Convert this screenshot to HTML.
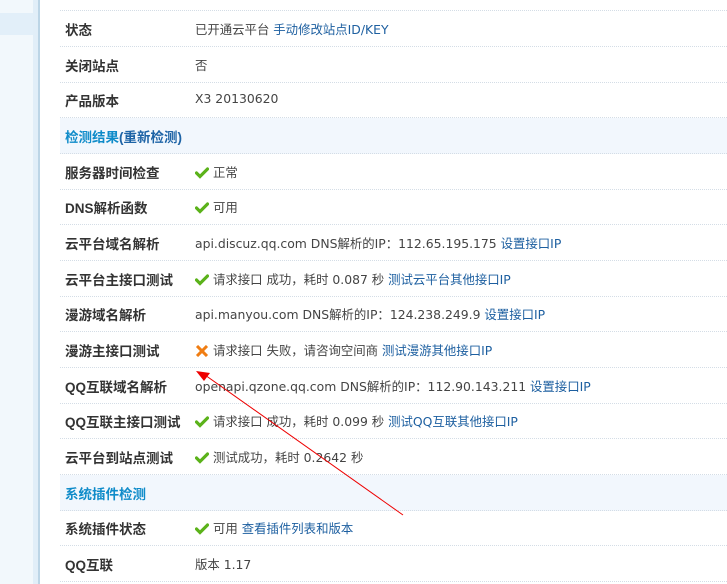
<!DOCTYPE html>
<html><head><meta charset="utf-8"><style>
body{margin:0;width:727px;height:584px;overflow:hidden;background:#fff;font-family:"Liberation Sans","Noto Sans CJK SC",sans-serif;font-size:12px;color:#333;position:relative}
.sb{position:absolute;left:0;top:0;width:33px;height:584px;background:#f2f8fc}
.sb2{position:absolute;left:33px;top:0;width:5px;height:584px;background:#e1eef8}
.sb3{position:absolute;left:38px;top:0;width:2px;height:584px;background:#bcd5e6}
.hl{position:absolute;left:0;top:13px;width:33px;height:22px;background:#e2eff9}
.row{position:absolute;left:60px;right:0;height:36px;border-bottom:1px dotted #d4dde6;box-sizing:border-box}
.row .l{position:absolute;left:5px;top:8px;font-weight:bold;color:#333;font-size:13.5px}
.row .v{position:absolute;left:135px;top:9px;color:#444;white-space:nowrap;font-family:"DejaVu Sans","Noto Sans CJK SC",sans-serif;font-size:12.4px}
.hd{background:#f2f7fd}
.hd .l{color:#0e8bc9}
.hd .l span{color:#1d63a6}
a{color:#1d5fa0;text-decoration:none}
.ok,.no{display:inline-block;width:14px;height:12px;vertical-align:-2px;margin-right:4px}
</style></head><body>
<div class="sb"></div><div class="sb2"></div><div class="sb3"></div><div class="hl"></div>
<svg width="0" height="0" style="position:absolute"><defs>
<symbol id="ck" viewBox="0 0 14 12"><path d="M1.5 6 L5 9.5 L12.5 2" stroke="#5bb21a" stroke-width="3.2" fill="none" stroke-linecap="round"/></symbol>
<symbol id="x" viewBox="0 0 14 12"><path d="M2 1 L12 11 M12 1 L2 11" stroke="#f07d12" stroke-width="3" fill="none"/></symbol>
</defs></svg>
<div class="row" style="top:-25px"></div>
<div class="row" style="top:11px"><span class="l">状态</span><span class="v">已开通云平台 <a>手动修改站点ID/KEY</a></span></div>
<div class="row" style="top:46.7px"><span class="l">关闭站点</span><span class="v">否</span></div>
<div class="row" style="top:82.3px"><span class="l">产品版本</span><span class="v">X3 20130620</span></div>
<div class="row hd" style="top:118px"><span class="l">检测结果<span>(重新检测)</span></span></div>
<div class="row" style="top:153.7px"><span class="l">服务器时间检查</span><span class="v"><svg class="ok"><use href="#ck"/></svg>正常</span></div>
<div class="row" style="top:189.3px"><span class="l">DNS解析函数</span><span class="v"><svg class="ok"><use href="#ck"/></svg>可用</span></div>
<div class="row" style="top:225px"><span class="l">云平台域名解析</span><span class="v">api.discuz.qq.com DNS解析的IP：112.65.195.175 <a>设置接口IP</a></span></div>
<div class="row" style="top:260.7px"><span class="l">云平台主接口测试</span><span class="v"><svg class="ok"><use href="#ck"/></svg>请求接口 成功，耗时 0.087 秒 <a>测试云平台其他接口IP</a></span></div>
<div class="row" style="top:296.3px"><span class="l">漫游域名解析</span><span class="v">api.manyou.com DNS解析的IP：124.238.249.9 <a>设置接口IP</a></span></div>
<div class="row" style="top:332px"><span class="l">漫游主接口测试</span><span class="v"><svg class="no"><use href="#x"/></svg>请求接口 失败，请咨询空间商 <a>测试漫游其他接口IP</a></span></div>
<div class="row" style="top:367.7px"><span class="l">QQ互联域名解析</span><span class="v">openapi.qzone.qq.com DNS解析的IP：112.90.143.211 <a>设置接口IP</a></span></div>
<div class="row" style="top:403.3px"><span class="l">QQ互联主接口测试</span><span class="v"><svg class="ok"><use href="#ck"/></svg>请求接口 成功，耗时 0.099 秒 <a>测试QQ互联其他接口IP</a></span></div>
<div class="row" style="top:439px"><span class="l">云平台到站点测试</span><span class="v"><svg class="ok"><use href="#ck"/></svg>测试成功，耗时 0.2642 秒</span></div>
<div class="row hd" style="top:474.7px"><span class="l">系统插件检测</span></div>
<div class="row" style="top:510.3px"><span class="l">系统插件状态</span><span class="v"><svg class="ok"><use href="#ck"/></svg>可用 <a>查看插件列表和版本</a></span></div>
<div class="row" style="top:546px"><span class="l">QQ互联</span><span class="v">版本 1.17</span></div>
<svg style="position:absolute;left:0;top:0" width="727" height="584"><line x1="403" y1="515" x2="205" y2="375" stroke="#e00" stroke-width="1"/><polygon points="196,371 210,373 204,381" fill="#e00"/></svg>
</body></html>
